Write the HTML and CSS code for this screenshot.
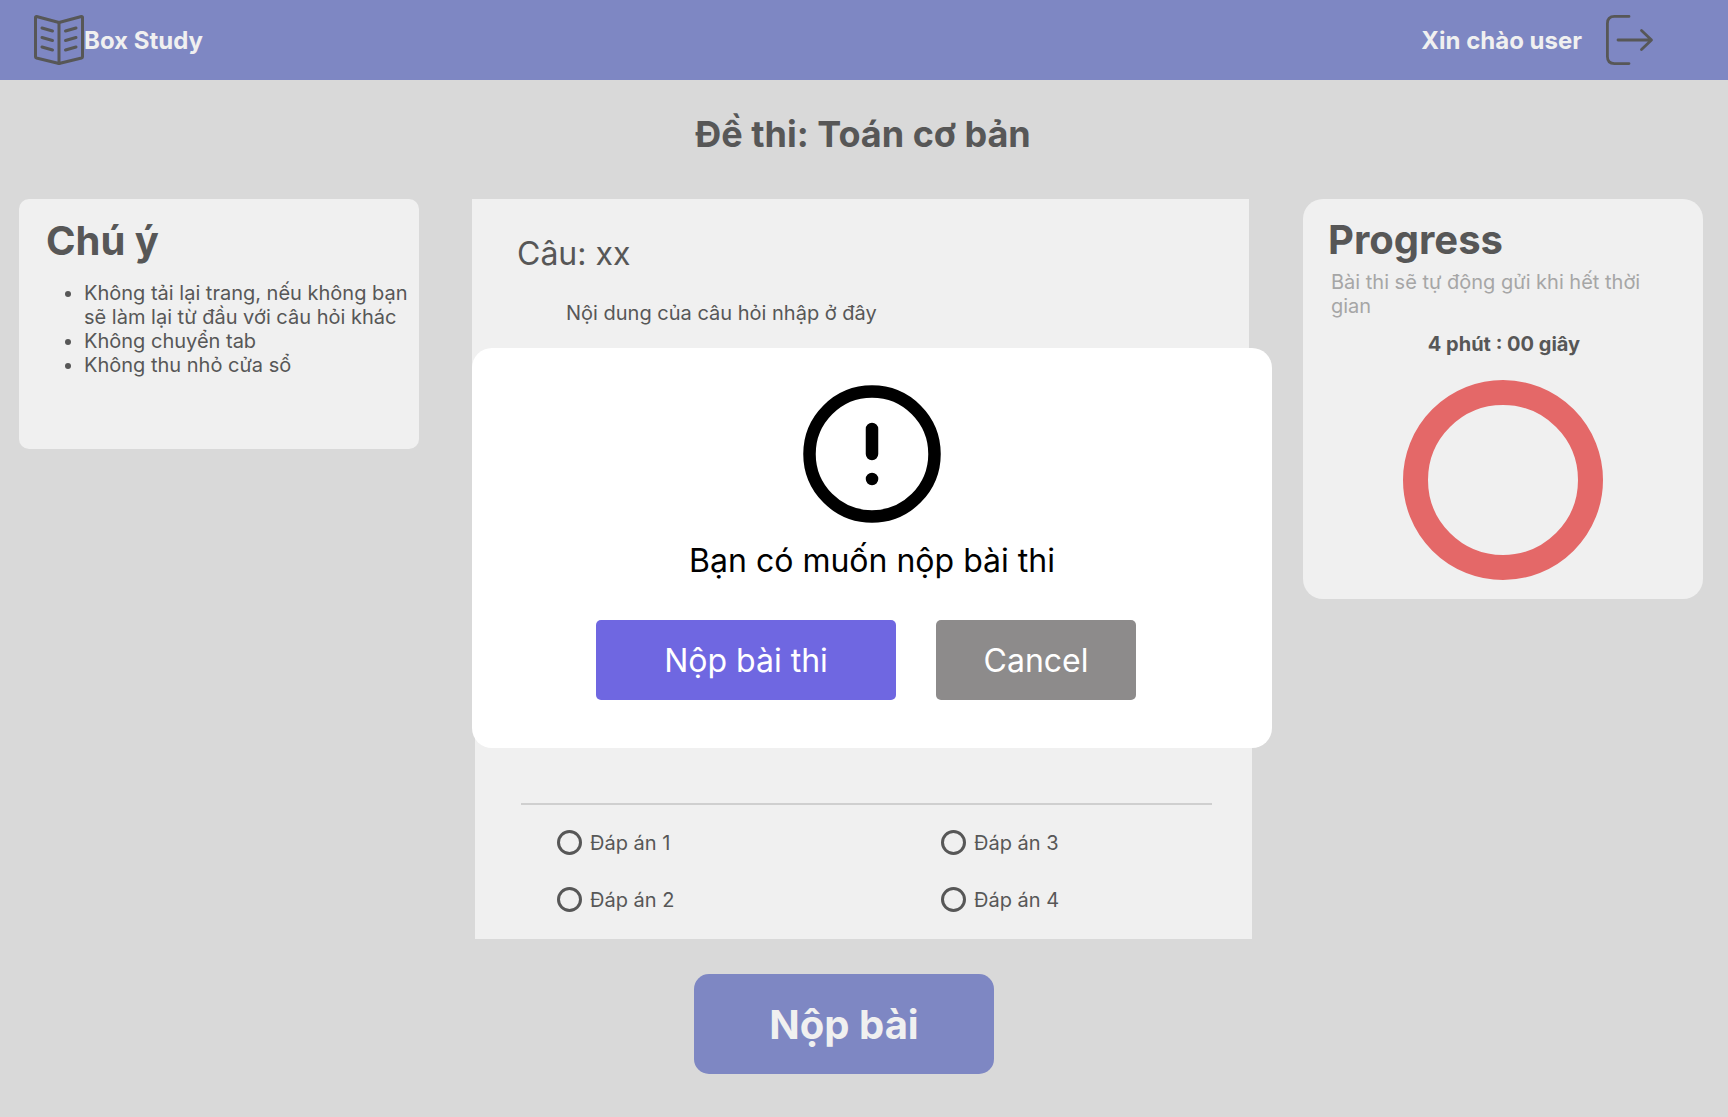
FILE: index.html
```html
<!DOCTYPE html>
<html lang="vi">
<head>
  <meta charset="utf-8">
  <meta name="viewport" content="width=device-width, initial-scale=1">
  <title>Box Study</title>
  <link rel="stylesheet" href="styles.css">
</head>
<body>
  <header class="topbar">
    <a class="brand" href="#">
      <svg class="brand-icon" viewBox="0 0 50 50" fill="none" stroke="currentColor" stroke-width="3" stroke-linecap="round" stroke-linejoin="round" aria-hidden="true">
        <path d="M25 7.5 2.6 1.5Q1.5 1.5 1.5 2.6V42Q1.5 42.8 2.4 43L25 48.5 47.6 43Q48.5 42.8 48.5 42V2.6Q48.5 1.5 47.4 1.5Z"/>
        <path d="M25 7.5V48.5M8 13 18.500 16M8 22.500 18.500 25.500M8 32 18.500 35M42 13 31.500 16M42 22.500 31.500 25.500M42 32 31.500 35"/>
      </svg>
      <span>Box Study</span>
    </a>
    <div class="account">
      <span>Xin chào user</span>
      <button class="logout" type="button" aria-label="Đăng xuất">
        <svg class="logout-icon" viewBox="0 0 50 50" fill="none" stroke="currentColor" stroke-width="2.800" stroke-linecap="round" stroke-linejoin="round" aria-hidden="true">
          <path d="M25 1.400H10.500Q3.400 1.400 3.400 8.500V41.500Q3.400 48.600 10.500 48.600H25"/>
          <path d="M14 25H47M37.500 15.500 47.500 25 37.500 34.500"/>
        </svg>
      </button>
    </div>
  </header>

  <main class="exam">
    <h1 class="exam-title">Đề thi: Toán cơ bản</h1>

    <div class="columns">
      <aside class="card notice">
        <h2 class="card-title">Chú ý</h2>
        <ul class="rules">
          <li>Không tải lại trang, nếu không bạn sẽ làm lại từ đầu với câu hỏi khác</li>
          <li>Không chuyển tab</li>
          <li>Không thu nhỏ cửa sổ</li>
        </ul>
      </aside>

      <form class="question">
        <section class="prompt">
          <h2 class="prompt-title">Câu: xx</h2>
          <p class="prompt-text">Nội dung của câu hỏi nhập ở đây</p>
        </section>
        <section class="answers">
          <div class="options">
            <label class="option"><input class="radio" type="radio" name="answer" value="1">Đáp án 1</label>
            <label class="option"><input class="radio" type="radio" name="answer" value="3">Đáp án 3</label>
            <label class="option"><input class="radio" type="radio" name="answer" value="2">Đáp án 2</label>
            <label class="option"><input class="radio" type="radio" name="answer" value="4">Đáp án 4</label>
          </div>
        </section>
        <button class="submit" type="submit">Nộp bài</button>

        <div class="dialog" role="dialog" aria-modal="true" aria-labelledby="dialog-title">
          <svg class="dialog-icon" viewBox="0 0 24 24" fill="none" stroke="currentColor" stroke-width="2" stroke-linecap="round" aria-hidden="true">
            <circle cx="12" cy="12" r="10"/>
            <path d="M12 8v4M12 16h.01"/>
          </svg>
          <p class="dialog-title" id="dialog-title">Bạn có muốn nộp bài thi</p>
          <div class="dialog-actions">
            <button class="button confirm" type="button">Nộp bài thi</button>
            <button class="button cancel" type="button">Cancel</button>
          </div>
        </div>
      </form>

      <aside class="card progress">
        <h2 class="card-title">Progress</h2>
        <p class="progress-note">Bài thi sẽ tự động gửi khi hết thời gian</p>
        <p class="timer">4 phút : 00 giây</p>
        <div class="ring"></div>
      </aside>
    </div>
  </main>
</body>
</html>
```
FILE: styles.css
```css
* {
  box-sizing: border-box;
}

body {
  margin: 0;
  min-height: 100vh;
  background: #d9d9d9;
  color: #575757;
  font-family: Inter, "Liberation Sans", sans-serif;
  font-size: 20px;
  line-height: 24px;
}

h1,
h2,
p,
ul {
  margin: 0;
}

button {
  border: 0;
  font-family: inherit;
  cursor: pointer;
}

.topbar {
  display: flex;
  align-items: center;
  justify-content: space-between;
  height: 80px;
  padding: 0 74px 0 34px;
  background: #7e87c3;
  color: #f0f0f0;
  font-size: 24px;
  font-weight: 700;
  line-height: 29px;
}

.brand,
.account {
  display: flex;
  align-items: center;
}

.brand {
  color: inherit;
  text-decoration: none;
}

.brand-icon,
.logout-icon {
  display: block;
  width: 50px;
  height: 50px;
  color: #575757;
}

.account {
  gap: 22px;
}

.logout {
  padding: 0;
  background: none;
}

.exam {
  padding: 32px 25px 43px 19px;
}

.exam-title {
  padding-left: 4px;
  font-size: 36px;
  line-height: 44px;
  text-align: center;
}

.columns {
  display: grid;
  grid-template-columns: 400px 1fr 400px;
  gap: 51px;
  align-items: start;
  margin-top: 43px;
}

.card {
  background: #f0f0f0;
}

.card-title {
  font-size: 40px;
  line-height: 48px;
}

.notice {
  min-height: 250px;
  padding: 18px 8px 18px 27px;
  border-radius: 10px;
}

.rules {
  margin-top: 16px;
  padding-left: 38px;
}

.question {
  position: relative;
  display: flex;
  flex-direction: column;
  margin-left: 2px;
}

.prompt {
  min-height: 400px;
  margin-right: 3px;
  padding: 35px 45px;
  background: #f0f0f0;
}

.prompt-title {
  font-size: 32px;
  font-weight: 400;
  line-height: 39px;
}

.prompt-text {
  margin-top: 28px;
  padding-left: 49px;
}

.answers {
  display: flex;
  flex-direction: column;
  justify-content: flex-end;
  min-height: 340px;
  margin-left: 3px;
  padding: 0 40px 27px 46px;
  background: #f0f0f0;
}

.options {
  display: grid;
  grid-template-columns: 384px 1fr;
  gap: 32px 0;
  padding: 25px 0 0 36px;
  border-top: 2px solid #cfcfcf;
}

.option {
  display: flex;
  align-items: center;
  gap: 8px;
  height: 25px;
}

.radio {
  appearance: none;
  width: 25px;
  height: 25px;
  margin: 0;
  border: 3px solid #575757;
  border-radius: 50%;
}

.radio:checked {
  background: radial-gradient(#575757 40%, transparent 45%);
}

.submit {
  align-self: center;
  width: 300px;
  height: 100px;
  margin: 35px 36px 0 0;
  border-radius: 15px;
  background: #7e87c3;
  color: #f0f0f0;
  font-size: 40px;
  font-weight: 700;
}

.progress {
  padding: 17px 25px 19px;
  border-radius: 20px;
}

.progress-note {
  margin-top: 6px;
  padding: 0 24px 0 3px;
  color: #a6a6a6;
}

.timer {
  margin-top: 14px;
  padding-left: 2px;
  font-weight: 700;
  text-align: center;
}

.ring {
  width: 200px;
  height: 200px;
  margin: 24px auto 0;
  border: 25px solid #e46868;
  border-radius: 50%;
}

/* Confirmation shown over the question */
.dialog {
  position: absolute;
  top: 149px;
  left: 0;
  display: flex;
  flex-direction: column;
  align-items: center;
  width: calc(100% + 20px);
  padding: 31px 20px 48px;
  border-radius: 20px;
  background: #fff;
  color: #000;
}

.dialog-icon {
  width: 150px;
  height: 150px;
}

.dialog-title {
  margin-top: 12px;
  font-size: 32px;
  line-height: 39px;
}

.dialog-actions {
  display: flex;
  gap: 40px;
  margin: 40px 12px 0 0;
}

.button {
  height: 80px;
  border-radius: 5px;
  color: #fff;
  font-size: 32px;
}

.confirm {
  width: 300px;
  background: #6f67e1;
}

.cancel {
  width: 200px;
  background: #8d8b8b;
}
```
